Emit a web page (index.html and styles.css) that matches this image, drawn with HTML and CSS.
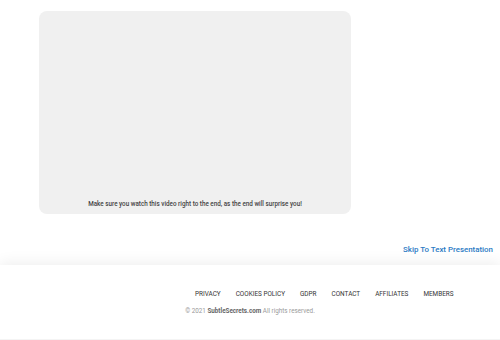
FILE: index.html
```html
<!DOCTYPE html>
<html lang="en">
<head>
    <meta charset="UTF-8">
    <meta name="viewport" content="width=device-width, initial-scale=1.0">
    <title>Subtle Secrets</title>
    <link rel="stylesheet" href="styles.css">
</head>
<body>

<main class="content">
  <div class="video">
    <p class="video__caption">Make sure you watch this video right to the end, as the end will surprise you!</p>
  </div>

  <div class="skip">
    <a href="#">Skip To Text Presentation</a>
  </div>
</main>

<footer class="footer">
  <ul class="footer__menu">
    <li><a href="#">Privacy</a></li>
    <li><a href="#">Cookies Policy</a></li>
    <li><a href="#">GDPR</a></li>
    <li><a href="#">Contact</a></li>
    <li><a href="#">Affiliates</a></li>
    <li><a href="#">Members</a></li>
  </ul>
  <p class="footer__copy">&copy; 2021 <strong>SubtleSecrets.com</strong> All rights reserved.</p>
</footer>

</body>
</html>
```

FILE: styles.css
```css
:root {
  --clr-box: #f0f0f0;
  --clr-text: #333;
  --clr-muted: #9a9a9a;
  --clr-link: #2b7bc4;
}

* {
  box-sizing: border-box;
}

body {
  margin: 0;
  font-family: Roboto, "Liberation Sans", sans-serif;
  color: var(--clr-text);
  background: #fff;
}

.content {
  padding-top: 11px;
  height: 265px;
}

/* video placeholder */
.video {
  margin-left: 39px;
  width: 312px;
  height: 203px;
  background: var(--clr-box);
  border-radius: 8px;
  display: flex;
  align-items: flex-end;
  justify-content: center;
  padding-bottom: 6px;
}

.video__caption {
  margin: 0;
  font-size: 6.3px;
  font-weight: 500;
  color: #444;
}

.skip {
  display: flex;
  justify-content: flex-end;
  padding-right: 7px;
  margin-top: 31px;
}

.skip a {
  color: var(--clr-link);
  font-size: 7.9px;
  font-weight: 500;
  text-decoration: none;
}

/* footer */
.footer {
  height: 75px;
  box-shadow: 0 -2px 14px rgba(0, 0, 0, 0.07);
  border-bottom: 1px solid #f4f4f4;
  padding-top: 22px;
}

.footer__menu {
  margin: 0 0 0 195px;
  padding: 0;
  list-style: none;
  display: flex;
  gap: 15px;
  line-height: 8px;
}

.footer__menu a {
  font-size: 6.4px;
  text-transform: uppercase;
  color: #333;
  text-decoration: none;
}

.footer__copy {
  margin: 9px 0 0;
  text-align: center;
  font-size: 6.3px;
  line-height: 8px;
  color: var(--clr-muted);
}

.footer__copy strong {
  color: #666;
  font-weight: 700;
}
```
